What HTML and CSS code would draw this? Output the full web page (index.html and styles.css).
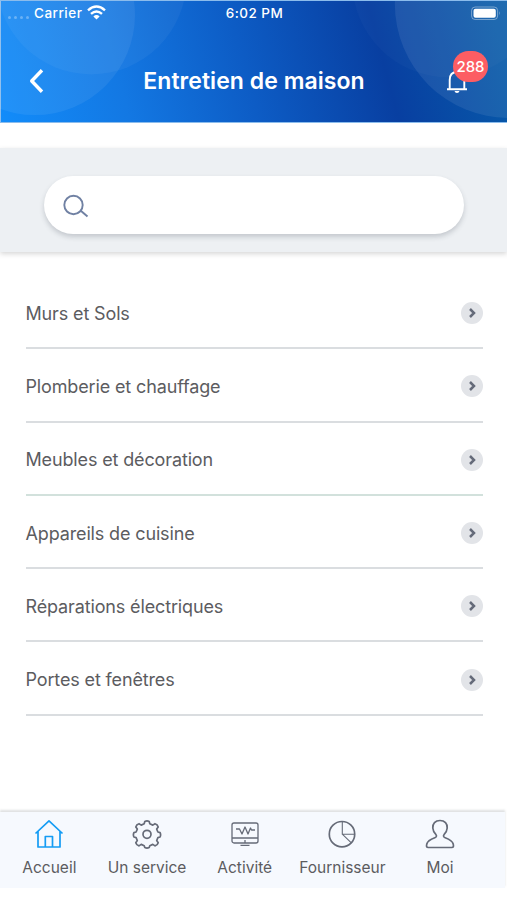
FILE: index.html
```html
<!DOCTYPE html>
<html lang="fr">
<head>
<meta charset="utf-8">
<title>Entretien de maison</title>
<link rel="stylesheet" href="styles.css">
</head>
<body>
<header class="header">
  <svg class="header-art" viewBox="0 0 507 122" aria-hidden="true">
    <g fill="#fff">
      <circle cx="33" cy="14" r="101" opacity=".065"/>
      <circle cx="90" cy="-22" r="96" opacity=".045"/>
      <circle cx="511" cy="3" r="115" opacity=".08"/>
      <circle cx="450" cy="-20" r="97" opacity=".025"/>
    </g>
  </svg>
  <div class="status">
    <div class="carrier">
      <span class="dots"><i></i><i></i><i></i><i></i></span>
      <span>Carrier</span>
      <svg width="19" height="15" viewBox="0 0 19 15" fill="none" stroke="#fff" stroke-width="2.4"><path d="M1 5.4Q9.500-2.200 18 5.400M4 8.900Q9.500 4 15 8.900"/><path d="M6.400 11.400Q9.500 8.800 12.600 11.400L9.500 14.400Z" fill="#fff" stroke="none"/></svg>
    </div>
    <span class="time">6:02 PM</span>
    <svg class="battery" width="30" height="15" viewBox="0 0 30 15"><rect x=".6" y="1" width="26" height="12.500" rx="3.500" fill="none" stroke="#fff" stroke-opacity=".4"/><rect x="2.500" y="2.800" width="22.300" height="9" rx="2" fill="#fff"/><path d="M28 5v4.500q1.500-2.200 0-4.500" fill="#fff" opacity=".45"/></svg>
  </div>
  <div class="titlebar">
    <svg class="back" width="18" height="26" viewBox="0 0 18 26" fill="none" stroke="#fff" stroke-width="3.400" stroke-linejoin="round"><path d="M15 2.300 4.700 13 15 23.700"/></svg>
    <h1>Entretien de maison</h1>
    <div class="bell">
      <svg width="24" height="26" viewBox="0 0 24 26" fill="none" stroke="#fff" stroke-width="1.900"><path d="M2 21.200h20M4.700 21V12c0-5 2.700-8 7.300-8s7.300 3 7.300 8v9"/><path d="M9.500 23h5q-.5 2-2.500 2t-2.500-2Z" fill="#fff" stroke="none"/></svg>
      <span class="badge">288</span>
    </div>
  </div>
</header>
<section class="search">
  <div class="search-field">
    <svg width="26" height="24" viewBox="0 0 26 24" fill="none" stroke="#7081a3" stroke-width="1.900"><circle cx="10.500" cy="11" r="9.200"/><path d="m17.500 16.500 7 6"/></svg>
  </div>
</section>
<main class="list">
  <div class="row"><span>Murs et Sols</span><svg class="go" viewBox="0 0 22 22"><path d="m9 7 4 4-4 4"/></svg></div>
  <div class="row"><span>Plomberie et chauffage</span><svg class="go" viewBox="0 0 22 22"><path d="m9 7 4 4-4 4"/></svg></div>
  <div class="row row-green"><span>Meubles et décoration</span><svg class="go" viewBox="0 0 22 22"><path d="m9 7 4 4-4 4"/></svg></div>
  <div class="row"><span>Appareils de cuisine</span><svg class="go" viewBox="0 0 22 22"><path d="m9 7 4 4-4 4"/></svg></div>
  <div class="row"><span>Réparations électriques</span><svg class="go" viewBox="0 0 22 22"><path d="m9 7 4 4-4 4"/></svg></div>
  <div class="row"><span>Portes et fenêtres</span><svg class="go" viewBox="0 0 22 22"><path d="m9 7 4 4-4 4"/></svg></div>
</main>
<nav class="tabs">
  <div class="tab active"><svg viewBox="0 0 30 30"><path d="M1.500 14.500 15 1.800l13.500 12.700M4 12.500V28h22V12.500M11.300 28V17.500h7.200V28"/></svg><span>Accueil</span></div>
  <div class="tab"><svg viewBox="0 0 30 30"><path d="M12.200 4.800 12.800 2.400q2.200-1 4.400 0l.6 2.400 3 1.300 2.200-1.400q2.500.7 3.200 3.200l-1.500 2.200 1.200 2.900 2.200.6q1 2.200 0 4.400l-2.200.6-1.200 2.900 1.500 2.200q-.7 2.500-3.200 3.200l-2.200-1.500-3 1.300-.6 1.900q-2.200 1-4.400 0l-.6-1.900-3-1.300L7 26.900q-2.500-.7-3.200-3.200l1.500-2.200-1.200-2.900-2.200-.6q-1-2.200 0-4.400l2.200-.6 1.200-2.900-1.500-2.200Q4.500 5.400 7 4.700l2.200 1.400Z"/><circle cx="15" cy="15.300" r="4"/></svg><span>Un service</span></div>
  <div class="tab"><svg class="monitor" viewBox="0 0 30 30"><rect x="2" y="4" width="26" height="20" rx="2"/><path d="M2 19h26M15 21v3M10.500 26.300h9M6 10h3.500l2.500 5 3-7 3 7 2.500-6 1 2H25"/></svg><span>Activité</span></div>
  <div class="tab"><svg viewBox="0 0 30 30"><circle cx="15" cy="15.200" r="12.700"/><path class="thin" d="M15.300 2.500v12.700h12.500M15.300 15.200l9 8.700"/></svg><span>Fournisseur</span></div>
  <div class="tab"><svg viewBox="0 0 30 30"><path d="M15 1.500c-4.800 0-7.500 3.200-7.200 7.500.2 3.300 1.500 5 3.200 6.700 1 1.200.3 2.500-1.200 3.100-4 1.500-7.300 3.200-8 6.200-.6 2.500-.3 3.500 1.500 3.500h23.400c1.800 0 2.100-1 1.500-3.500-.7-3-4-4.700-8-6.200-1.500-.6-2.200-1.900-1.200-3.100 1.700-1.700 3-3.400 3.200-6.700.3-4.300-2.400-7.500-7.200-7.500Z"/></svg><span>Moi</span></div>
</nav>
</body>
</html>
```
FILE: styles.css
```css
* { box-sizing: border-box; }
body {
  margin: 0;
  height: 900px;
  display: flex;
  flex-direction: column;
  overflow: hidden;
  background: #fff;
  color: #5c5c5f;
  font-family: Inter, "Liberation Sans", sans-serif;
}
svg { display: block; flex: none; }
.header {
  position: relative;
  height: 123px;
  border: 1px solid #8bbcec;
  border-width: 1px 0 1px 1px;
  background: linear-gradient(75deg, #128cfa 0%, #1378e3 24%, #0d5cc5 48%, #083fa1 74%, #075daa 100%);
  color: #fff;
}
.header-art { position: absolute; inset: 0 0 0 -1px; width: 507px; height: 121px; }
.status {
  position: relative;
  display: grid;
  grid-template-columns: 1fr auto 1fr;
  align-items: center;
  height: 24px;
  padding: 0 6px 0 7px;
  font-size: 13.500px;
  font-weight: 500;
  letter-spacing: .5px;
}
.carrier { display: flex; align-items: center; gap: 6px; }
.carrier svg { margin: -1px 0 0 -1px; }
.dots { display: flex; gap: 3px; padding-top: 8px; margin-right: -1px; }
.dots i { width: 3px; height: 3px; border-radius: 50%; background: #fff; opacity: .3; }
.battery { justify-self: end; }
.titlebar {
  position: relative;
  display: grid;
  grid-template-columns: 116px 1fr 116px;
  align-items: center;
  height: 60px;
  margin-top: 25px;
}
.back { margin: 1px 0 0 26px; }
h1 {
  margin: 1px 0 0;
  text-align: center;
  font-size: 23px;
  font-weight: 600;
  letter-spacing: .05px;
  white-space: nowrap;
}
.bell { position: relative; justify-self: end; margin: 1px 38px 0 0; }
.badge {
  position: absolute;
  left: 8px;
  top: -17px;
  width: 35px;
  height: 31px;
  border-radius: 16px;
  background: #fc5d63;
  font-size: 15px;
  font-weight: 500;
  line-height: 31px;
  text-align: center;
}
.search {
  height: 104px;
  margin-top: 25px;
  padding: 28px 43px 0 44px;
  background: #edf0f3;
  box-shadow: 0 2px 5px rgba(0, 0, 0, .16);
}
.search-field {
  display: flex;
  align-items: center;
  height: 58px;
  padding: 2px 0 0 19px;
  border-radius: 29px;
  background: #fff;
  box-shadow: 0 3px 5px rgba(70, 80, 90, .24);
}
.list { margin: 24px 24.500px 0 25.500px; }
.row {
  display: flex;
  align-items: center;
  justify-content: space-between;
  height: 73.300px;
  padding-top: 3px;
  border-bottom: 2px solid #dadde0;
  font-size: 18px;
  letter-spacing: -.14px;
}
.row-green { border-color: #d2e1dc; }
.go { width: 22px; height: 22px; border-radius: 50%; background: #e2e4e8; }
.go path { fill: none; stroke: #656b7a; stroke-width: 2.500; }
.tabs {
  display: grid;
  grid-template-columns: repeat(5, 97.700px);
  height: 76px;
  margin: auto 2px 12px 0;
  padding-left: .5px;
  background: #f6f9fe;
  box-shadow: 0 -2px 2px rgba(80, 90, 95, .18);
}
.tab {
  display: flex;
  flex-direction: column;
  align-items: center;
  padding-top: 7px;
  font-size: 15.500px;
  line-height: 20px;
  gap: 9px;
}
.tab svg { width: 30px; height: 30px; fill: none; stroke: #666b78; stroke-width: 1.700; stroke-linejoin: round; }
.tab .monitor { stroke-width: 1.300; }
.tab .thin { stroke-width: 1.100; }
.tab.active svg { stroke: #149cf4; }
```
